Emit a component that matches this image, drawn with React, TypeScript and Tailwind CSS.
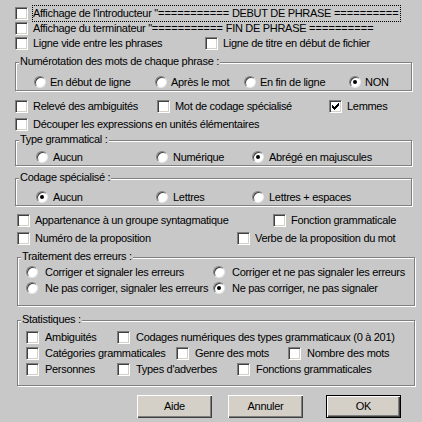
import React from 'react';

// Boîte à cocher façon Windows classique
const Check: React.FC<{ checked?: boolean }> = ({ checked }) => (
  <span className="relative inline-block w-[13px] h-[13px] shrink-0 bg-white border border-t-[#808080] border-l-[#808080] border-b-white border-r-white shadow-[inset_1px_1px_0_#404040,inset_-1px_-1px_0_#d4d0c8]">
    {checked && (
      <svg className="absolute left-0 top-0" width="11" height="11" viewBox="0 0 11 11" shapeRendering="crispEdges">
        <path d="M2 4h1v1h1v1h1V5h1V4h1V3h1V2h1v3h-1v1h-1v1h-1v1h-1v1H4V8H3V7H2z" fill="#000" />
      </svg>
    )}
  </span>
);

const Radio: React.FC<{ checked?: boolean }> = ({ checked }) => (
  <span className="relative inline-flex items-center justify-center w-[12px] h-[12px] shrink-0 rounded-full bg-white border border-t-[#808080] border-l-[#808080] border-b-[#e8e8e8] border-r-[#e8e8e8] shadow-[inset_1px_1px_0_#404040]">
    {checked && <span className="w-[4px] h-[4px] rounded-full bg-black" />}
  </span>
);

const CheckItem: React.FC<{ label: React.ReactNode; checked?: boolean; w?: string; gap?: string }> = ({ label, checked, w = '', gap = 'ml-[5px]' }) => (
  <div className={`flex items-center shrink-0 ${w}`}>
    <Check checked={checked} />
    <span className={`${gap} whitespace-nowrap`}>{label}</span>
  </div>
);

const RadioItem: React.FC<{ label: string; checked?: boolean; w?: string; gap?: string }> = ({ label, checked, w = '', gap = 'ml-[4px]' }) => (
  <div className={`flex items-center shrink-0 ${w}`}>
    <Radio checked={checked} />
    <span className={`${gap} whitespace-nowrap`}>{label}</span>
  </div>
);

const Group: React.FC<{ title: string; className: string; children: React.ReactNode }> = ({ title, className, children }) => (
  <div className={`relative border border-[#808080] shadow-[inset_1px_1px_0_#fff,1px_1px_0_#fff] ${className}`}>
    <span className="absolute -top-[8px] left-[3px] px-[1px] bg-[#c8c8c8] whitespace-nowrap">{title}</span>
    {children}
  </div>
);

const Button: React.FC<{ label: string; isDefault?: boolean; className?: string }> = ({ label, isDefault, className = '' }) => (
  isDefault ? (
    <div className={`w-[75px] h-[23px] border border-black ${className}`}>
      <div className="w-full h-full flex items-center justify-center bg-[#d4d0c8] shadow-[inset_1px_1px_0_#fff,inset_-1px_-1px_0_#404040,inset_-2px_-2px_0_#808080]">
        {label}
      </div>
    </div>
  ) : (
    <div className={`w-[75px] h-[23px] flex items-center justify-center bg-[#d4d0c8] shadow-[inset_1px_1px_0_#fff,inset_-1px_-1px_0_#404040,inset_-2px_-2px_0_#808080] ${className}`}>
      {label}
    </div>
  )
);

// les signes "=" sont plus larges dans la police système d'origine
const Eq: React.FC<{ n: number }> = ({ n }) => <span className="tracking-[0.05px]">{'='.repeat(n)}</span>;

const App: React.FC = () => {
  return (
    <div className="w-[422px] h-[422px] overflow-hidden bg-[#c8c8c8] text-black text-[11px] leading-[13px] tracking-[-0.3px] font-['Liberation_Sans',Arial,sans-serif]">
      <div className="pt-[6px] pl-[15px]">
        <div className="flex items-center h-[15px]">
          <Check />
          <span className="ml-[4px] border border-dotted border-black pr-[1px] whitespace-nowrap leading-[15px]">
            Affichage de l'introducteur "<Eq n={11} /> DEBUT DE PHRASE <Eq n={10} />
          </span>
        </div>
        <div className="flex items-center h-[15px]">
          <CheckItem label={<>Affichage du terminateur "<Eq n={11} /> FIN DE PHRASE <Eq n={10} /></>} />
        </div>
        <div className="flex items-center h-[15px]">
          <CheckItem label="Ligne vide entre les phrases" w="w-[190px]" />
          <CheckItem label="Ligne de titre en début de fichier" />
        </div>
      </div>

      <Group title="Numérotation des mots de chaque phrase :" className="mt-[11px] ml-[15px] w-[397px] pt-[12px] pb-[1px]">
        <div className="flex items-center h-[14px] pl-[18px]">
          <RadioItem label="En début de ligne" w="w-[121px]" />
          <RadioItem label="Après le mot" w="w-[89px]" />
          <RadioItem label="En fin de ligne" w="w-[105px]" />
          <RadioItem label="NON" checked />
        </div>
      </Group>

      <div className="mt-[6px] pl-[15px]">
        <div className="flex items-center h-[18px]">
          <CheckItem label="Relevé des ambiguités" w="w-[142px]" />
          <CheckItem label="Mot de codage spécialisé" w="w-[172px]" />
          <CheckItem label="Lemmes" checked />
        </div>
        <div className="flex items-center h-[18px]">
          <CheckItem label="Découper les expressions en unités élémentaires" />
        </div>
      </div>

      <Group title="Type grammatical :" className="mt-[7px] ml-[15px] w-[397px] pt-[10px] pb-[2px]">
        <div className="flex items-center h-[12px] pl-[20px]">
          <RadioItem label="Aucun" w="w-[120px]" gap="ml-[5px]" />
          <RadioItem label="Numérique" w="w-[96px]" gap="ml-[5px]" />
          <RadioItem label="Abrégé en majuscules" checked gap="ml-[5px]" />
        </div>
      </Group>

      <Group title="Codage spécialisé :" className="mt-[12px] ml-[15px] w-[397px] pt-[12px] pb-[2px]">
        <div className="flex items-center h-[12px] pl-[20px]">
          <RadioItem label="Aucun" checked w="w-[120px]" gap="ml-[5px]" />
          <RadioItem label="Lettres" w="w-[96px]" gap="ml-[5px]" />
          <RadioItem label="Lettres + espaces" gap="ml-[5px]" />
        </div>
      </Group>

      <div className="mt-[5px] pl-[17px]">
        <div className="flex items-center h-[18px]">
          <CheckItem label="Appartenance à un groupe syntagmatique" w="w-[256px]" />
          <CheckItem label="Fonction grammaticale" />
        </div>
        <div className="flex items-center h-[18px]">
          <CheckItem label="Numéro de la proposition" w="w-[220px]" />
          <CheckItem label="Verbe de la proposition du mot" />
        </div>
      </div>

      <Group title="Traitement des erreurs :" className="mt-[10px] ml-[17px] w-[398px] pt-[6px] pb-[9px]">
        <div className="pl-[8px]">
          <div className="flex items-center h-[16px]">
            <RadioItem label="Corriger et signaler les erreurs" w="w-[187px]" gap="ml-[7px]" />
            <RadioItem label="Corriger et ne pas signaler les erreurs" gap="ml-[7px]" />
          </div>
          <div className="flex items-center h-[16px]">
            <RadioItem label="Ne pas corriger, signaler les erreurs" w="w-[187px]" gap="ml-[7px]" />
            <RadioItem label="Ne pas corriger, ne pas signaler" checked gap="ml-[7px]" />
          </div>
        </div>
      </Group>

      <Group title="Statistiques :" className="mt-[14px] ml-[17px] w-[398px] pt-[8px] pb-[8px]">
        <div className="pl-[8px]">
          <div className="flex items-center h-[16px]">
            <CheckItem label="Ambiguités" w="w-[91px]" gap="ml-[6px]" />
            <CheckItem label="Codages numériques des types grammaticaux (0 à 201)" gap="ml-[6px]" />
          </div>
          <div className="flex items-center h-[16px]">
            <CheckItem label="Catégories grammaticales" w="w-[150px]" gap="ml-[6px]" />
            <CheckItem label="Genre des mots" w="w-[112px]" gap="ml-[6px]" />
            <CheckItem label="Nombre des mots" gap="ml-[6px]" />
          </div>
          <div className="flex items-center h-[16px]">
            <CheckItem label="Personnes" w="w-[91px]" gap="ml-[6px]" />
            <CheckItem label="Types d'adverbes" w="w-[120px]" gap="ml-[6px]" />
            <CheckItem label="Fonctions grammaticales" gap="ml-[6px]" />
          </div>
        </div>
      </Group>

      <div className="mt-[9px] flex">
        <Button label="Aide" className="ml-[137px]" />
        <Button label="Annuler" className="ml-[16px]" />
        <Button label="OK" isDefault className="ml-[23px]" />
      </div>
    </div>
  );
};

export default App;
